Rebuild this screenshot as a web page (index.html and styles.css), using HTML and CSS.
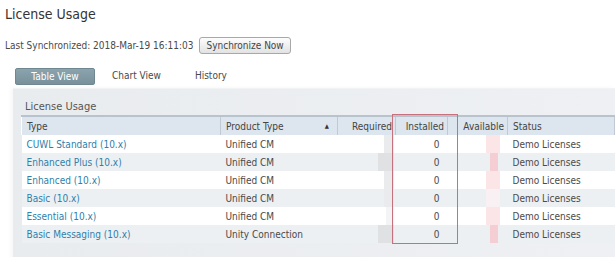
FILE: index.html
```html
<!DOCTYPE html>
<html lang="en">
<head>
  <meta charset="UTF-8" />
  <title>License Usage</title>
  <link rel="stylesheet" href="styles.css">
</head>
<body>
  <h1 class="page-title">License Usage</h1>

  <div class="sync-row">
    <span>Last Synchronized: 2018-Mar-19 16:11:03</span>
    <button class="sync-btn">Synchronize Now</button>
  </div>

  <div class="tabs">
    <div class="tab active">Table View</div>
    <div class="tab">Chart View</div>
    <div class="tab">History</div>
  </div>

  <div class="panel">
    <div class="panel-title">License Usage</div>
    <div class="table-wrap">
      <table class="usage">
        <colgroup>
          <col class="c-type">
          <col class="c-product">
          <col class="c-required">
          <col class="c-installed">
          <col class="c-available">
          <col class="c-status">
        </colgroup>
        <thead>
          <tr>
            <th>Type</th>
            <th class="sorted">Product Type <span class="arrow">&#9650;</span></th>
            <th class="num">Required</th>
            <th class="num">Installed</th>
            <th class="num">Available</th>
            <th>Status</th>
          </tr>
        </thead>
        <tbody>
          <tr>
            <td><a href="#">CUWL Standard (10.x)</a></td>
            <td>Unified CM</td>
            <td class="num"><span class="blur g1"></span></td>
            <td class="num">0</td>
            <td class="num"><span class="blur p1"></span></td>
            <td>Demo Licenses</td>
          </tr>
          <tr>
            <td><a href="#">Enhanced Plus (10.x)</a></td>
            <td>Unified CM</td>
            <td class="num"><span class="blur g2"></span></td>
            <td class="num">0</td>
            <td class="num"><span class="blur p2"></span></td>
            <td>Demo Licenses</td>
          </tr>
          <tr>
            <td><a href="#">Enhanced (10.x)</a></td>
            <td>Unified CM</td>
            <td class="num"><span class="blur g1"></span></td>
            <td class="num">0</td>
            <td class="num"><span class="blur p1"></span></td>
            <td>Demo Licenses</td>
          </tr>
          <tr>
            <td><a href="#">Basic (10.x)</a></td>
            <td>Unified CM</td>
            <td class="num"><span class="blur g1"></span></td>
            <td class="num">0</td>
            <td class="num"><span class="blur p0"></span></td>
            <td>Demo Licenses</td>
          </tr>
          <tr>
            <td><a href="#">Essential (10.x)</a></td>
            <td>Unified CM</td>
            <td class="num"><span class="blur g0"></span></td>
            <td class="num">0</td>
            <td class="num"><span class="blur p1"></span></td>
            <td>Demo Licenses</td>
          </tr>
          <tr>
            <td><a href="#">Basic Messaging (10.x)</a></td>
            <td>Unity Connection</td>
            <td class="num"><span class="blur g2"></span></td>
            <td class="num">0</td>
            <td class="num"><span class="blur p2"></span></td>
            <td>Demo Licenses</td>
          </tr>
        </tbody>
      </table>
      <div class="highlight"></div>
    </div>
  </div>
</body>
</html>
```

FILE: styles.css
```css
body {
  margin: 0;
  background: #fff;
  color: #4a4a4a;
  font-family: "DejaVu Sans Condensed", "DejaVu Sans", sans-serif;
  font-size: 10px;
  overflow: hidden;
}

.page-title {
  margin: 0;
  padding: 4px 0 0 5px;
  font-size: 14px;
  font-weight: normal;
  line-height: 20px;
  color: #333;
}

.sync-row {
  display: flex;
  align-items: center;
  gap: 6px;
  padding: 13px 0 0 5px;
}

.sync-btn {
  font-family: inherit;
  font-size: 10px;
  color: #444;
  height: 17px;
  padding: 0 6px;
  border: 1px solid #a8a8a8;
  border-radius: 3px;
  background: linear-gradient(#fdfdfd, #e2e2e2);
}

.tabs {
  display: flex;
  padding: 14px 0 0 15px;
  height: 17px;
}

.tab {
  line-height: 16px;
  padding: 0 17px;
}

.tab.active {
  color: #fff;
  background: linear-gradient(#8ba3ad, #79919b);
  border: 1px solid #6f8790;
  border-radius: 2px;
  width: 78px;
  padding: 0;
  text-align: center;
}

.panel {
  margin: 3px 0 0 13px;
  padding: 11px 0 20px 8px;
  background: linear-gradient(90deg, #e9ecef, #eef0f3);
  border-top: 1px solid #f2f3f5;
  box-shadow: -2px 0 4px rgba(0, 0, 0, 0.04);
}

.panel-title {
  font-size: 11px;
  line-height: 14px;
  color: #555;
  padding-left: 4px;
  margin-bottom: 1px;
}

.table-wrap {
  position: relative;
}

.usage {
  width: 100%;
  border-collapse: collapse;
  table-layout: fixed;
}

.c-type { width: 199px; }
.c-product { width: 117px; }
.c-required { width: 58px; }
.c-installed { width: 52px; }
.c-available { width: 60px; }

.usage th {
  height: 18px;
  padding: 0 5px;
  font-weight: normal;
  text-align: left;
  color: #444;
  background: #dde5ee;
  border-top: 2px solid #b9c3cd;
  border-left: 1px solid #fff;
  border-right: 1px solid #c0cad4;
}

.usage th.sorted {
  position: relative;
}

.arrow {
  position: absolute;
  right: 8px;
  top: 5px;
  font-size: 6px;
  color: #333;
}

.usage td {
  height: 18px;
  padding: 0 5px;
  white-space: nowrap;
  position: relative;
}

.usage tbody tr:nth-child(odd) td { background: #fff; }
.usage tbody tr:nth-child(even) td { background: #edf0f3; }

.usage .num { text-align: right; padding-right: 8px; }
.usage th.num { padding-right: 3px; }

.usage a {
  color: #2f7fab;
  text-decoration: none;
}

.blur {
  position: absolute;
  top: 0;
  height: 18px;
  right: 2px;
  width: 8px;
}

.g0 { background: #f3f4f5; }
.g1 { background: #eaebec; width: 10px; }
.g2 { background: #e0e1e3; width: 16px; }
.p0 { background: #f8f0f2; right: 8px; width: 14px; }
.p1 { background: #fce5e7; right: 8px; width: 14px; }
.p2 { background: #f4ced2; right: 10px; width: 8px; }

.highlight {
  position: absolute;
  left: 371px;
  top: -1px;
  width: 64px;
  height: 128px;
  border: 1px solid #c8717e;
  pointer-events: none;
}
```
